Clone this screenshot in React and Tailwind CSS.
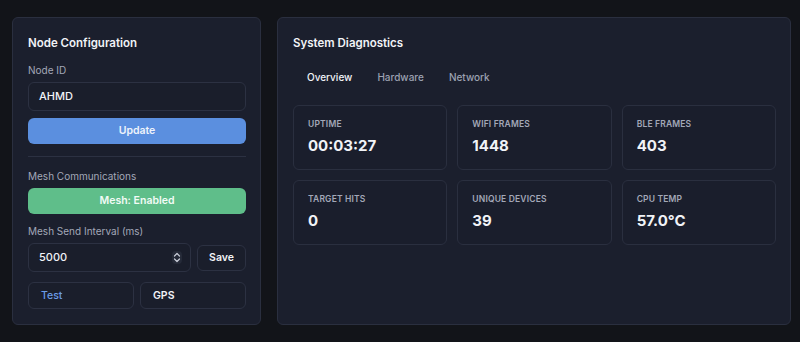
import React from "react";

function Stat({ label, value }) {
  return (
    <div className="h-[65px] rounded-md border border-[#2a2f3f] bg-[#1a1e2c] px-[14px] pt-[12px]">
      <div className="text-[8.5px] font-semibold leading-[12px] tracking-[0.02em] text-[#a3a8b8]">{label}</div>
      <div className="mt-[6px] text-[15px] font-bold leading-[20px] text-[#f1f3f7]">{value}</div>
    </div>
  );
}

export default function App() {
  return (
    <div
      className="flex h-[342px] w-[800px] gap-4 bg-[#121419] pl-3 pt-[17px] text-white"
      style={{ fontFamily: "Inter, 'Noto Sans', sans-serif" }}
    >
      <div className="flex h-[308px] w-[249px] flex-col rounded-md border border-[#2a2f3f] bg-[#1b1f2d] pl-[15px] pr-[14px] pt-[15px]">
        <h2 className="text-[11.5px] font-semibold leading-5 text-[#f1f3f7]">Node Configuration</h2>
        <label className="mt-[9px] text-[10px] leading-4 text-[#a3a8b8]">Node ID</label>
        <div className="mt-1 flex h-[29px] items-center rounded-md border border-[#2c3142] bg-[#1a1e2b] px-[10px] text-[11px] font-medium text-[#f1f3f7]">
          AHMD
        </div>
        <button className="mt-[7px] h-[26px] rounded-md bg-[#5b8fdf] text-[10.5px] font-semibold text-[#eef3fb]">Update</button>
        <div className="mt-3 h-px bg-[#2c3142]" />
        <label className="mt-[11px] text-[10px] leading-4 text-[#a3a8b8]">Mesh Communications</label>
        <button className="mt-1 h-[26px] rounded-md bg-[#5fbe8a] text-[10.5px] font-semibold text-[#f2fbf6]">Mesh: Enabled</button>
        <label className="mt-[9px] text-[10px] leading-4 text-[#a3a8b8]">Mesh Send Interval (ms)</label>
        <div className="mt-1 flex items-center gap-[6px]">
          <div className="flex h-[29px] flex-1 items-center justify-between rounded-md border border-[#2c3142] bg-[#1a1e2b] pl-[10px] pr-[8px] text-[11px] font-medium text-[#f1f3f7]">
            <span>5000</span>
            <span className="flex h-[13px] w-[10px] items-center justify-center rounded-sm bg-[#252a38]">
              <svg width="8" height="11" viewBox="0 0 8 11" fill="none" stroke="#c9cdd8" strokeWidth="1.2" strokeLinecap="round" strokeLinejoin="round">
                <path d="M1.5 4 L4 1.5 L6.5 4" />
                <path d="M1.5 7 L4 9.5 L6.5 7" />
              </svg>
            </span>
          </div>
          <button className="h-[26px] w-[49px] rounded-md border border-[#2c3142] bg-[#1a1e2b] text-[10.5px] font-semibold text-[#f1f3f7]">Save</button>
        </div>
        <div className="mt-[10px] flex gap-[6px]">
          <button className="flex h-[27px] flex-1 items-center rounded-md border border-[#2c3142] bg-[#1a1e2b] pl-3 text-[10.5px] font-medium text-[#6b9be6]">Test</button>
          <button className="flex h-[27px] flex-1 items-center rounded-md border border-[#2c3142] bg-[#1a1e2b] pl-3 text-[10.5px] font-semibold text-[#f1f3f7]">GPS</button>
        </div>
      </div>

      <div className="h-[308px] w-[514px] rounded-md border border-[#2a2f3f] bg-[#1b1f2d] pl-[15px] pr-[14px] pt-[15px]">
        <h2 className="text-[11.5px] font-semibold leading-5 text-[#f1f3f7]">System Diagnostics</h2>
        <div className="mt-[16px] flex gap-[25px] pl-[14px] text-[10px] font-medium leading-4">
          <span className="text-[#f1f3f7]">Overview</span>
          <span className="text-[#9ca1b1]">Hardware</span>
          <span className="text-[#9ca1b1]">Network</span>
        </div>
        <div className="mt-[20px] grid grid-cols-3 gap-[10px]">
          <Stat label="UPTIME" value="00:03:27" />
          <Stat label="WIFI FRAMES" value="1448" />
          <Stat label="BLE FRAMES" value="403" />
          <Stat label="TARGET HITS" value="0" />
          <Stat label="UNIQUE DEVICES" value="39" />
          <Stat label="CPU TEMP" value="57.0°C" />
        </div>
      </div>
    </div>
  );
}
